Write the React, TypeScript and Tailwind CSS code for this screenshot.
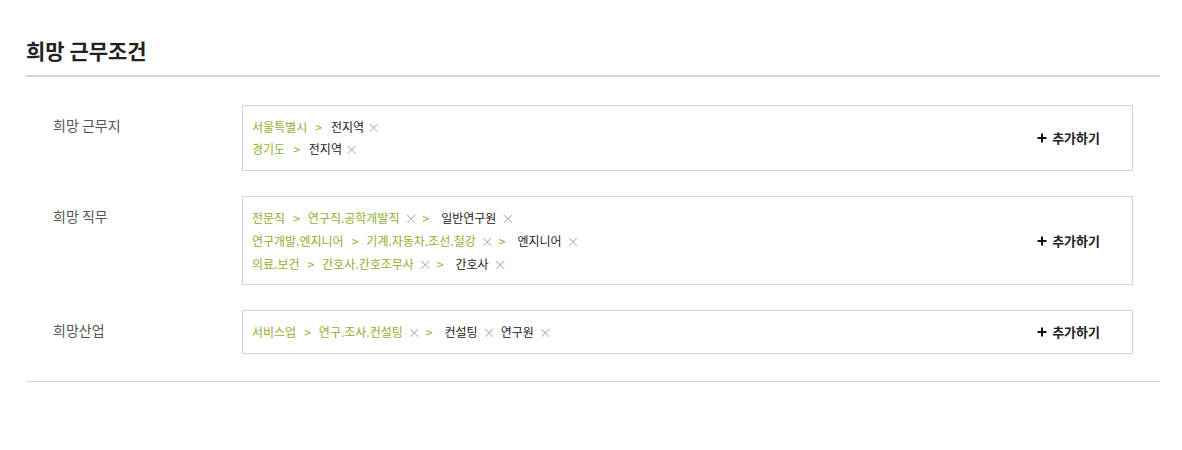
import React from "react";

const GREEN = "text-[#8fae2f]";

function X({ tight }: { tight?: boolean }) {
  return (
    <span className={`${tight ? "ml-[3px]" : "ml-[5px]"} mr-[5px] text-[#999] text-[13px] font-light`}>×</span>
  );
}
function Gt() {
  return <span className={`${GREEN} mx-[8px]`}>&gt;</span>;
}
function Gt2() {
  return <span className={`${GREEN} mr-[12px]`}>&gt;</span>;
}

function Line({ parts, tall }: { parts: React.ReactNode[]; tall?: boolean }) {
  return (
    <div className={`flex items-center ${tall ? "h-[23px]" : "h-[22px]"} whitespace-nowrap`}>{parts}</div>
  );
}

function Row({ label, lines, tall }: { label: string; lines: React.ReactNode[][]; tall?: boolean }) {
  return (
    <div className="flex">
      <div className="w-[216px] pl-[27px] pt-[9px] text-[14px] leading-[22px] text-[#555]">{label}</div>
      <div
        className={`w-[891px] border border-[#cad6e2] flex items-center justify-between ${
          tall ? "py-[9px]" : "py-[10px]"
        } pl-[9px] pr-[32px]`}
      >
        <div className="text-[12px] flex flex-col">
          {lines.map((p, i) => (
            <Line key={i} parts={p} tall={tall} />
          ))}
        </div>
        <div className="flex items-center gap-[5px] text-[13px] font-bold text-[#222]">
          <svg width="10" height="10" viewBox="0 0 10 10">
            <path d="M5 0.5V9.5M0.5 5H9.5" stroke="#111" strokeWidth="2" />
          </svg>
          <span>추가하기</span>
        </div>
      </div>
    </div>
  );
}

const g = (t: string) => <span className={GREEN}>{t}</span>;
const d = (t: string) => <span className="text-[#222]">{t}</span>;

export default function App() {
  const font = { fontFamily: '"Noto Sans CJK KR", "Noto Sans", sans-serif' };
  return (
    <div className="w-[1182px] h-[450px] bg-white pl-[26px] pt-[35px]" style={font}>
      <div className="w-[1134px]">
        <h2 className="text-[21px] font-bold leading-[30px] text-[#222] pb-[10px] border-b-2 border-[#cad6e2]">
          희망 근무조건
        </h2>
        <div className="flex flex-col gap-[25px] pt-[28px] pb-[27px] border-b border-[#cad6e2]">
          <Row
            label="희망 근무지"
            lines={[
              [g("서울특별시"), <Gt key="a" />, <span key="s" className="ml-[1px]" />, d("전지역"), <X key="x" tight />],
              [g("경기도"), <Gt key="a" />, <span key="s" className="ml-[1px]" />, d("전지역"), <X key="x" tight />],
            ]}
          />
          <Row
            label="희망 직무"
            tall
            lines={[
              [g("전문직"), <Gt key="a" />, g("연구직.공학개발직"), <X key="x1" />, <Gt2 key="b" />, d("일반연구원"), <X key="x2" />],
              [g("연구개발.엔지니어"), <Gt key="a" />, g("기계.자동차.조선.철강"), <X key="x1" />, <Gt2 key="b" />, d("엔지니어"), <X key="x2" />],
              [g("의료.보건"), <Gt key="a" />, g("간호사.간호조무사"), <X key="x1" />, <Gt2 key="b" />, d("간호사"), <X key="x2" />],
            ]}
          />
          <Row
            label="희망산업"
            lines={[
              [g("서비스업"), <Gt key="a" />, g("연구.조사.컨설팅"), <X key="x1" />, <Gt2 key="b" />, d("컨설팅"), <X key="x2" />, d("연구원"), <X key="x3" />],
            ]}
          />
        </div>
      </div>
    </div>
  );
}
